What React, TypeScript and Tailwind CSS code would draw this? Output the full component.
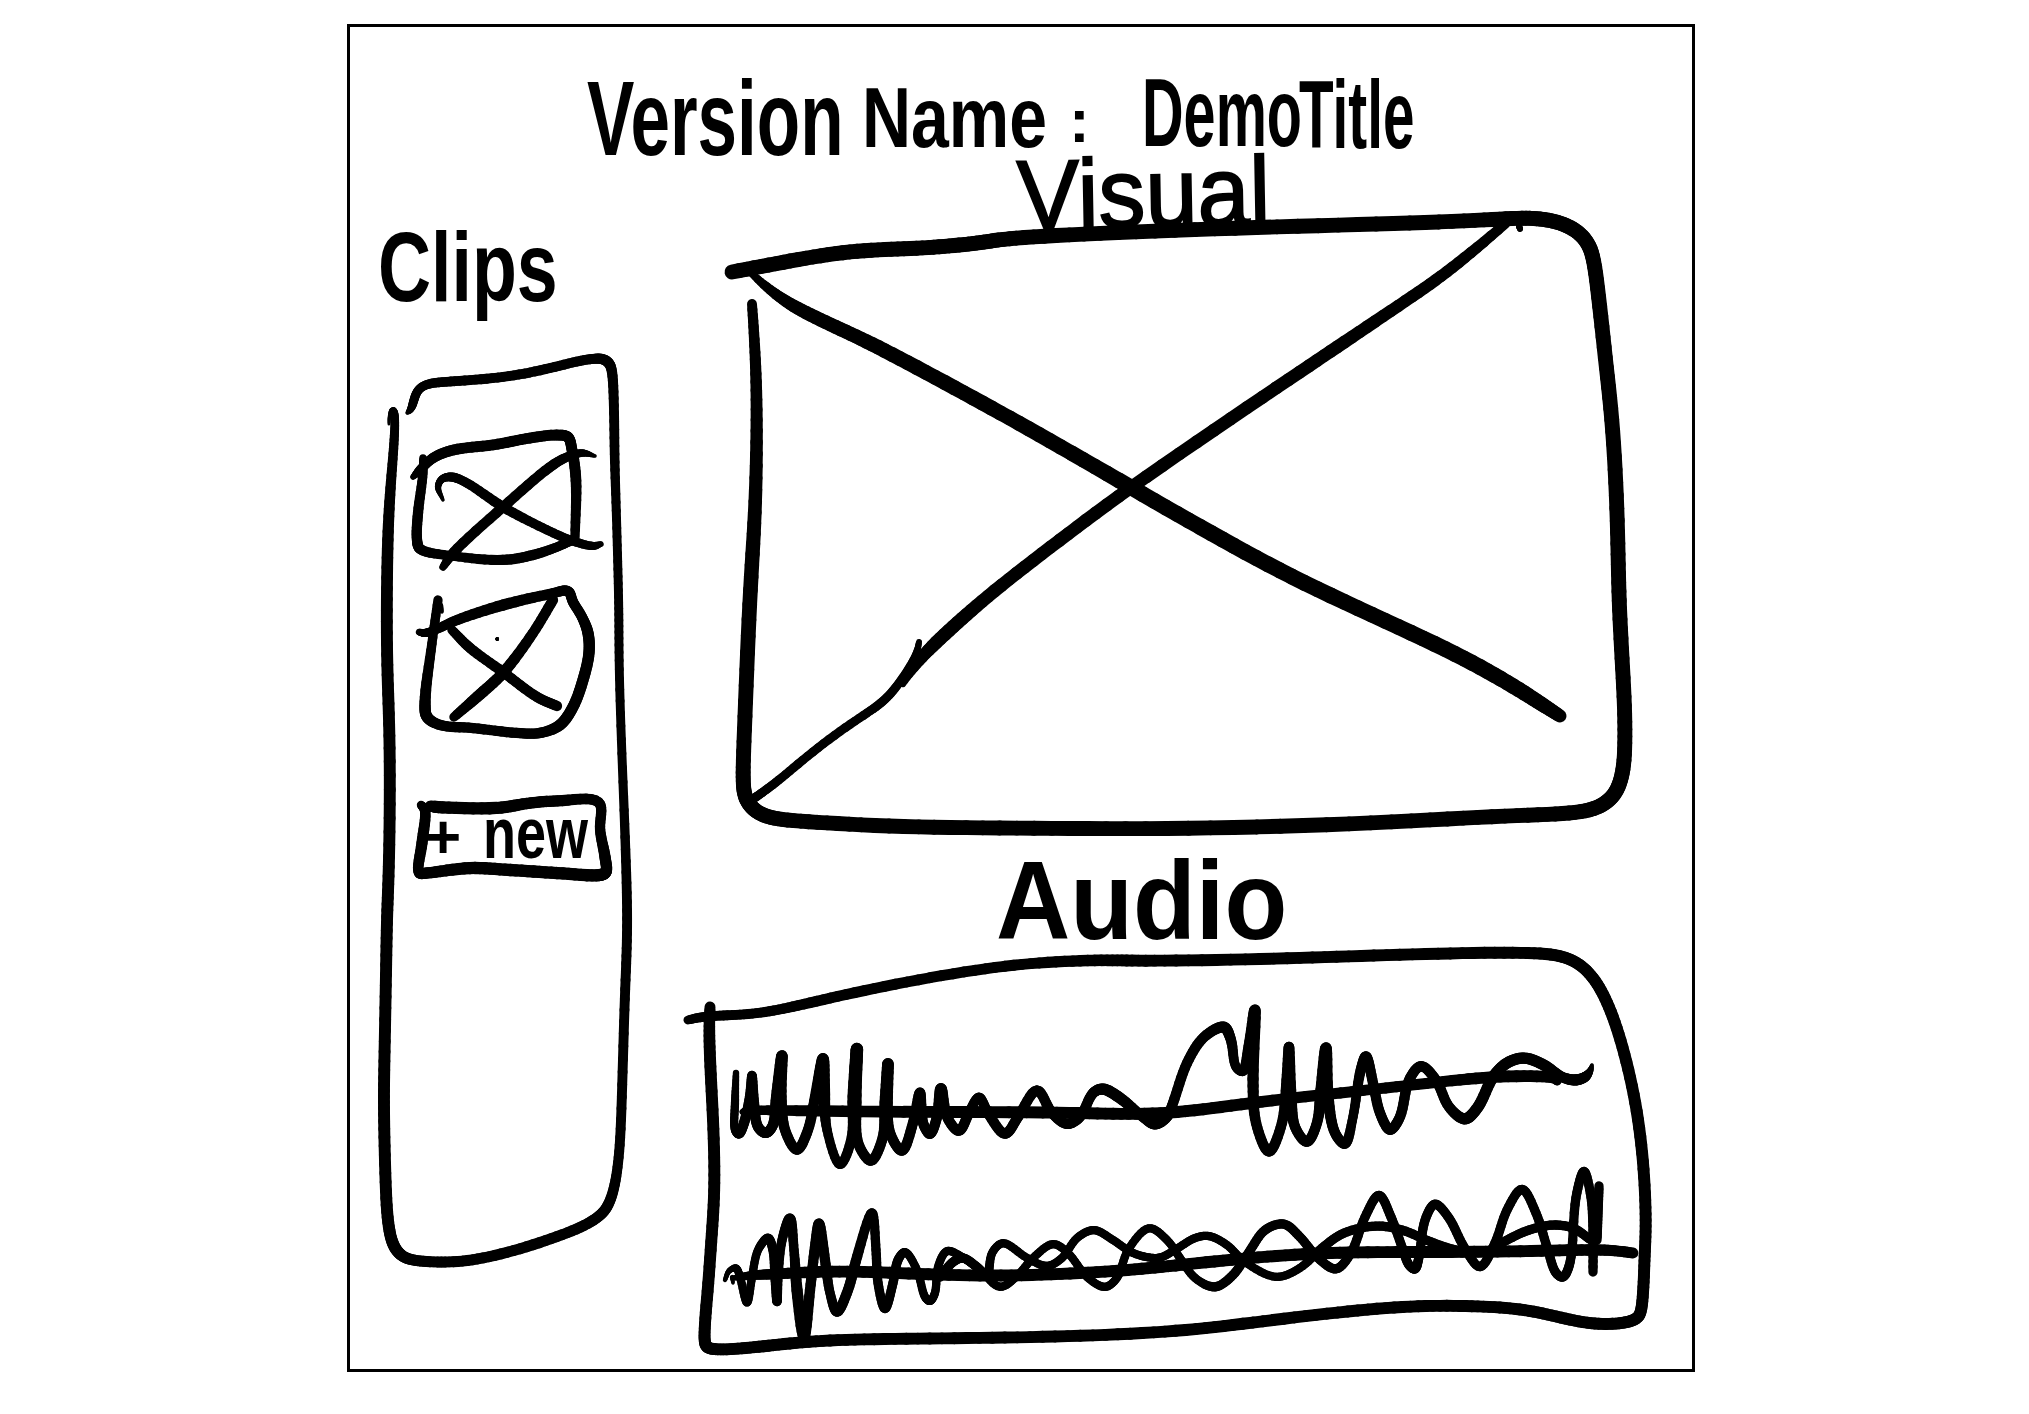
import React from "react";

type Pt = [number, number, number];

/** Parses "x,y,w x,y ..." where a missing width repeats the previous one. */
function parse(src: string): Pt[] {
  let w = 8;
  return src.trim().split(/\s+/).map((s) => {
    const n = s.split(",").map(Number);
    if (n.length > 2) w = n[2];
    return [n[0], n[1], w] as Pt;
  });
}

/** Centripetal Catmull-Rom sampling of a pen stroke, width included. */
function sample(p: Pt[], steps = 8): Pt[] {
  const out: Pt[] = [];
  for (let i = 0; i < p.length - 1; i++) {
    const b = p[i];
    const c = p[i + 1];
    const a = p[i - 1] ?? ([2 * b[0] - c[0], 2 * b[1] - c[1], b[2]] as Pt);
    const d = p[i + 2] ?? ([2 * c[0] - b[0], 2 * c[1] - b[1], c[2]] as Pt);
    const gap = (m: Pt, n: Pt) => Math.max(Math.sqrt(Math.hypot(m[0] - n[0], m[1] - n[1])), 0.01);
    const t1 = gap(a, b);
    const t2 = t1 + gap(b, c);
    const t3 = t2 + gap(c, d);
    for (let s = 0; s < steps; s++) {
      const k = s / steps;
      const t = t1 + (t2 - t1) * k;
      const v = [0, 1].map((j) => {
        const A1 = ((t1 - t) * a[j] + t * b[j]) / t1;
        const A2 = ((t2 - t) * b[j] + (t - t1) * c[j]) / (t2 - t1);
        const A3 = ((t3 - t) * c[j] + (t - t2) * d[j]) / (t3 - t2);
        const B1 = ((t2 - t) * A1 + t * A2) / t2;
        const B2 = ((t3 - t) * A2 + (t - t1) * A3) / (t3 - t1);
        return ((t2 - t) * B1 + (t - t1) * B2) / (t2 - t1);
      });
      out.push([v[0], v[1], b[2] + (c[2] - b[2]) * k]);
    }
  }
  out.push(p[p.length - 1]);
  return out;
}

/** Moving average that keeps both stroke ends in place. */
function smooth(p: Pt[], radius: number): Pt[] {
  return p.map((_, i) => {
    const r = Math.min(radius, i, p.length - 1 - i);
    const part = p.slice(i - r, i + r + 1);
    return [0, 1, 2].map((j) => part.reduce((s, q) => s + q[j], 0) / part.length) as Pt;
  });
}

function Ink({ d, radius, extra }: { d: string; radius: number; extra: number }) {
  const pts = smooth(sample(parse(d)), radius);
  return (
    <g stroke="#000" strokeLinecap="round" fill="none">
      {pts.slice(1).map((q, i) => (
        <line key={i} x1={pts[i][0]} y1={pts[i][1]} x2={q[0]} y2={q[1]} strokeWidth={(q[2] + pts[i][2]) / 2 + extra} />
      ))}
    </g>
  );
}

const clipPanel = [
  "407,413,2 412,408,8 415,395 423,385 443,382,9 487,379 530,373 570,363 597,358 608,361,10 613,373,9 614,440 616,500,8 618,573 619,620 619,670 623,783 627,890,9 627,947 624,1013 621,1130 617,1173 610,1203,10 598,1218 570,1232 520,1249 470,1261 437,1262 410,1260 398,1253,11 390,1237 386,1197 384,1113 384,1080 386,980 387,913 389,870 390,737 387,670 387,573 389,507,10 393,457,8.5 395,423,8 394,409,6 390,413,3 389,424,2",
];

const clipOne = [
  "413,477,4 420,470,8 433,458,9 453,450,9.5 493,445 530,438 557,435 568,437 572,450 576,480 575,537,8",
  "423,458,6 423,473,8 418,513,9 417,540 420,549 453,556,8 503,560,9 533,555 557,547,8 573,540",
  "443,567,6 453,553,9 503,507 550,467 567,457,8 583,453,6 595,456,2",
  "443,500,2 438,487,5 442,479,6 452,477,8 467,483 503,507,9 543,528,8 570,540 593,546,7 601,544,4",
];

const clipTwo = [
  "419,632,5 425,633,7 437,629,8 457,620,9 503,605,10 550,594,9 568,591 573,602 582,617 588,633,10 589,653 583,680 573,707 560,725 540,733,9 517,733 473,728 440,725 427,717,10 425,703 432,643,8 438,600",
  "441,605,3 442,612,2",
  "452,630,8 470,648,9 503,672 537,697 557,706",
  "553,600,9 533,633 503,673,10 477,697 454,717,8",
  "497,639,2 497.5,639",
];

const newBox = [
  "421,805,7 425,810,9 422,843,10 419,873,9 427,873,10 470,868,11 510,870 557,873 600,875 606,872,10 605,857 600,830,9 599,802 557,801,10 530,803 497,808,11 437,807 430,806,9",
];

const videoFrame = [
  "732,272,14 790,261,14 851,251 905,249 951,246 985,242 1012,238 1130,232 1300,226 1450,222 1517,218 1543,219 1567,225 1587,240 1595,265 1604,350 1613,425 1618,540 1619,607 1624,690 1625,753 1620,785 1607,803 1580,813,14 1513,815 1380,823 1180,829,14 1033,828 900,827,14 800,821 765,817 748,804 743,787 744,747 750,590 755,518,13 757,414,11 755,350,10 752,304,9",
  "752,274,6 776,295,10 804,312,13 847,332 886,351,14 966,394 1035,432 1132,488,15 1223,540 1313,588 1430,641 1497,676 1540,703,14 1560,716,12",
  "1505,224,9 1450,270,11 1410,298 1340,345,12 1294,376 1132,486 1060,540 990,594 953,627,13 920,658,12 903,684,5",
  "919,642,5 916,655,6 900,682,8 885,700 867,713 823,743 783,777 763,792 753,799",
  "1519,226,5 1520,229",
];

const audioFrame = [
  "710,1007,10 709,1037,11 712,1097 715,1180 712,1230 707,1303 704,1343 709,1349 733,1349 767,1346 813,1341 880,1339 980,1338 1080,1336 1180,1331 1249,1323 1340,1312 1413,1306 1467,1306 1511,1308 1547,1314 1584,1323 1613,1324 1636,1320 1642,1310 1644,1263 1646,1230 1644,1170 1636,1103 1620,1037 1605,997 1589,972 1569,958 1540,953 1467,953 1358,956 1267,959 1140,961 1113,960 1047,962,10 980,969 880,987 813,1002 773,1011,9 740,1015 707,1016 688,1020,8",
];

const trackBases = [
  "742,1112,4 750,1110,9 847,1112,11 1047,1112 1113,1114 1176,1113 1249,1103 1340,1093,10 1431,1083 1489,1077,11 1555,1077 1557,1081,8",
  "733,1278,4 753,1275,9 780,1274,10 830,1271,11 897,1273 980,1276 1063,1274 1130,1270 1180,1265 1249,1258 1322,1253 1395,1252 1485,1252 1576,1250 1609,1250,10 1633,1253",
];

const trackOne = [
  "736,1073,5 735,1103,7 735,1130 739,1134,8 744,1123,9 750,1097 752,1075,8 754,1103,9 758,1127 766,1133 773,1125 777,1097,11 782,1055,10 781,1097 785,1130,9 797,1150 808,1130 815,1097 823,1058,10 824,1090,11 827,1130,8 840,1165 852,1137,9 854,1097,12 857,1048,11 855,1103,12 858,1143,9 871,1161 883,1137 886,1103,12 888,1063,10 887,1103 890,1133,9 902,1151 913,1123 920,1092 923,1123 930,1134 937,1117 941,1088,10 947,1117,9 959,1131 969,1113 979,1097,8 988,1113,9 1005,1134 1018,1117 1037,1090 1052,1113 1067,1124 1080,1117 1093,1093 1103,1089,10 1120,1098 1143,1117,9 1155,1124,10 1167,1117,9 1173,1103 1187,1063 1204,1037 1224,1027,10 1231,1040,9 1236,1067,8 1243,1071,9 1249,1047,10 1255,1009 1253,1080 1256,1123,9 1269,1152 1282,1123 1287,1080,10 1289,1046,9 1291,1097,10 1295,1127,9 1307,1142 1317,1123 1321,1090,10 1326,1047 1328,1097 1335,1133,9 1345,1144 1353,1117,8 1360,1073,9 1366,1056 1373,1083 1380,1113 1390,1130 1400,1117 1409,1080 1421,1066 1436,1080 1449,1107 1465,1119,10 1478,1107 1493,1077 1507,1063 1524,1058 1544,1065 1562,1077,9 1575,1080,10 1585,1077,9 1590,1071,5 1592,1065,2",
];

const trackTwo = [
  "725,1280,3 729,1271,4 736,1268,6 740,1277,7 747,1303 752,1277 758,1250 768,1238,8 773,1250 775,1277 777,1302 778,1277 782,1240 790,1218,9 794,1250,8 797,1290,10 804,1337 810,1290,9 815,1247 819,1223 825,1260 830,1293,8 837,1312,9 848,1290 857,1257 872,1212,8 876,1250 878,1283 885,1309 893,1283 898,1260 905,1252,7 917,1270 925,1297 930,1301 935,1293 938,1267 947,1251 962,1257 980,1270 1000,1287 1017,1276 1033,1258 1053,1244 1068,1253 1087,1277 1105,1287 1117,1278 1128,1250 1149,1228 1167,1240 1180,1258 1195,1278 1215,1287,8 1233,1275 1249,1252 1265,1230 1284,1224 1300,1237 1318,1258 1336,1269 1351,1253 1365,1217 1379,1195 1391,1217 1402,1247 1409,1265 1415,1269 1419,1257 1425,1220 1435,1204 1449,1218 1464,1247 1480,1267 1495,1243 1507,1210 1522,1189 1536,1213 1547,1247 1556,1273 1563,1277 1570,1263 1576,1197 1584,1171 1591,1197 1593,1230 1593,1272",
  "940,1277,8 953,1262 963,1258 977,1267 987,1275 992,1253,7 1003,1243 1027,1258 1047,1266 1062,1258 1077,1238 1094,1230 1113,1240 1133,1253 1153,1258 1162,1257 1178,1248 1195,1238 1209,1236 1227,1245 1245,1262 1276,1277 1300,1268 1322,1248,8 1344,1233 1376,1226 1402,1230 1431,1242 1456,1250 1485,1252 1507,1240 1529,1230 1553,1225 1573,1228 1591,1240",
  "1599,1186,8 1598,1213 1597,1240",
  "1595,1205,6 1595,1240",
  "732,1277,3 733,1283,2",
];

interface DrawingProps {
  box: string;
  outlines: string[][];
  details?: string[][];
  className: string;
}

function Drawing({ box, outlines, details = [], className }: DrawingProps) {
  return (
    <svg viewBox={box} className={className} aria-hidden="true">
      {outlines.flat().map((d) => (
        <Ink key={d} d={d} radius={5} extra={0.9} />
      ))}
      {details.flat().map((d) => (
        <Ink key={d} d={d} radius={1} extra={1.3} />
      ))}
    </svg>
  );
}

export default function App() {
  return (
    <div className="h-[1414px] w-[2029px] overflow-hidden bg-white pt-6 pl-[347px] font-['Liberation_Sans',Arial,sans-serif] leading-none font-bold text-black">
      <div className="flex h-[1348px] w-[1348px] flex-col border-[3px] border-black">
        <header className="flex h-[113px] shrink-0 items-start pl-[237px] whitespace-nowrap">
          <h1 className="flex items-start">
            <span className="mt-[38px] w-[260px]">
              <span className="block w-max origin-left scale-x-[0.67] text-[106px] leading-none">Version</span>
            </span>
            <span className="mt-[47px] ml-[15px] w-[185px]">
              <span className="block w-max origin-left scale-x-[0.79] text-[86px] leading-none">Name</span>
            </span>
            <span className="mt-[63px] ml-[22px] w-5 text-[62px] leading-none">:</span>
          </h1>
          <p className="flex items-start pl-[53px]">
            <span className="mt-[38px] w-[161px]">
              <span className="block w-max origin-left scale-x-[0.6] text-[96px] leading-none">Demo</span>
            </span>
            <span className="mt-[40px] -ml-1 w-[116px]">
              <span className="block w-max origin-left scale-x-[0.59] text-[96px] leading-none">Title</span>
            </span>
          </p>
        </header>

        <div className="flex flex-1">
          <aside className="flex w-[300px] shrink-0 flex-col">
            <h2 className="mt-[78px] ml-7 w-max origin-left scale-x-[0.75] text-[98px] leading-none">Clips</h2>
            <div className="mt-6 grid h-[940px] w-[300px]">
              <Drawing
                box="350 340 300 940"
                outlines={[clipPanel]}
                details={[clipOne, clipTwo, newBox]}
                className="col-start-1 row-start-1 h-[940px] w-[300px]"
              />
              <button className="col-start-1 row-start-1 mt-[457px] ml-[75px] flex h-[72px] w-[184px] items-start font-bold">
                <span className="mt-[9px] w-[58px] shrink-0 text-left text-[62px] leading-none">+</span>
                <span className="block w-max shrink-0 origin-left scale-x-[0.75] text-[72px] leading-none">new</span>
              </button>
            </div>
          </aside>

          <main className="flex w-[1043px] shrink-0 flex-col">
            <h2 className="mt-[6px] ml-[367px] w-max origin-left scale-x-[0.955] -rotate-1 text-[98px] leading-none font-normal [-webkit-text-stroke:2px_black]">
              Visual
            </h2>
            <Drawing box="650 200 1043 640" outlines={[videoFrame]} className="-mt-[44px] h-[640px] w-[1043px] shrink-0" />
            <h2 className="mt-[5px] ml-[346px] w-max origin-left scale-x-[0.918] text-[112px] leading-none">Audio</h2>
            <Drawing
              box="650 940 1043 429"
              outlines={[audioFrame, trackBases]}
              details={[trackOne, trackTwo]}
              className="-mt-[17px] h-[429px] w-[1043px] shrink-0"
            />
          </main>
        </div>
      </div>
    </div>
  );
}
